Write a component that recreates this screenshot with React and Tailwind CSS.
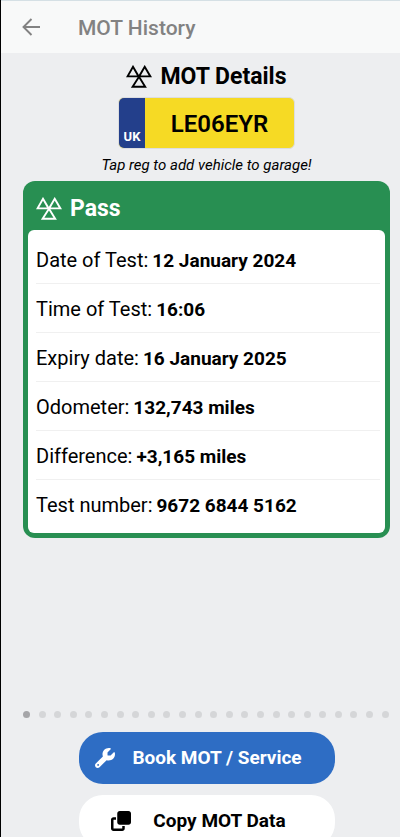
import { FaClone, FaWrench } from "react-icons/fa6";

const details = [
  ["Date of Test", "12 January 2024"],
  ["Time of Test", "16:06"],
  ["Expiry date", "16 January 2025"],
  ["Odometer", "132,743 miles"],
  ["Difference", "+3,165 miles"],
  ["Test number", "9672 6844 5162"],
];

function MotIcon({ className }) {
  return (
    <svg
      viewBox="0 0 26 24"
      className={className}
      fill="none"
      stroke="currentColor"
      strokeWidth="1.9"
      aria-hidden="true"
    >
      <path d="M7 1.8 L12.6 11.4 H1.6 Z" />
      <path d="M18.7 1.8 L24.4 11.4 H13.1 Z" />
      <path d="M13 11.8 L19.2 21.8 H6.6 Z" />
    </svg>
  );
}

function BackArrow() {
  return (
    <svg
      viewBox="0 0 20 20"
      className="h-5 w-5"
      fill="none"
      stroke="currentColor"
      strokeWidth="1.9"
      aria-hidden="true"
    >
      <path d="M19 10 H2.5 M10.5 2 L2.5 10 L10.5 18" />
    </svg>
  );
}

export default function App() {
  return (
    <div className="flex h-screen flex-col overflow-hidden border-l border-black bg-[#edeef0] font-['Roboto',sans-serif] text-black">
      <header className="flex h-[53px] shrink-0 items-center border-t border-[#d5e0e5] bg-[#f8f9f9] pl-5 text-[#828282]">
        <button type="button" aria-label="Back" className="mr-[37px]">
          <BackArrow />
        </button>
        <h1 className="pt-px text-[21px] leading-7 font-medium">MOT History</h1>
      </header>

      <main className="flex flex-col pr-[10px] pl-[22px]">
        <h2 className="mt-2 flex h-8 items-center justify-center gap-2 text-[23px] leading-8 font-bold">
          <MotIcon className="h-6 w-[26px]" />
          MOT Details
        </h2>

        <button
          type="button"
          className="mt-1 flex h-[52px] w-[177px] self-center overflow-hidden rounded-md border border-[#dcdde0] bg-[#f6da24]"
        >
          <span className="flex h-full w-[26px] items-end justify-center bg-[#233f8b] pb-[3px] text-[13px] leading-4 font-bold text-white">
            UK
          </span>
          <span className="flex h-full flex-1 items-center justify-center pt-[2px] text-2xl font-semibold">
            LE06EYR
          </span>
        </button>
        <p className="mt-1 mb-1 h-6 text-center text-[15px] leading-6 italic">
          Tap reg to add vehicle to garage!
        </p>

        <section className="rounded-xl bg-[#288f52] px-[5px] pb-[5px]">
          <h3 className="flex h-[49px] items-center gap-2 pt-[6px] pl-2 text-[23px] leading-8 font-bold text-white">
            <MotIcon className="h-6 w-[26px]" />
            Pass
          </h3>
          <dl className="rounded-md bg-white pt-[5px] pr-[5px] pb-1 pl-2">
            {details.map(([label, value]) => (
              <div
                key={label}
                className="flex h-[49px] items-baseline gap-1 border-b border-[#f0f0f0] pt-[11px] text-xl leading-7 last:border-b-0"
              >
                <dt>{label}:</dt>
                <dd className="text-[19px] font-bold">{value}</dd>
              </div>
            ))}
          </dl>
        </section>
      </main>

      <div className="mt-[173px] flex shrink-0 justify-between pr-[11px] pl-[22px]">
        {Array.from({ length: 24 }, (_, i) => (
          <span
            key={i}
            className={
              i === 0
                ? "h-[7px] w-[7px] rounded-full bg-[#a5a5a8]"
                : "h-[7px] w-[7px] rounded-full bg-[#d5d6d8]"
            }
          />
        ))}
      </div>

      <div className="mt-[14px] flex shrink-0 flex-col items-center gap-[11px] pl-3 text-[19px] font-bold">
        <button
          type="button"
          className="flex h-[52px] w-64 items-center justify-center gap-[17px] rounded-[24px] bg-[#2e6dc4] pr-4 text-white"
        >
          <FaWrench className="h-5 w-5" />
          Book MOT / Service
        </button>
        <button
          type="button"
          className="flex h-[52px] w-64 items-center justify-center gap-[22px] rounded-[24px] bg-white pr-4"
        >
          <FaClone className="h-5 w-5" />
          Copy MOT Data
        </button>
      </div>
    </div>
  );
}
